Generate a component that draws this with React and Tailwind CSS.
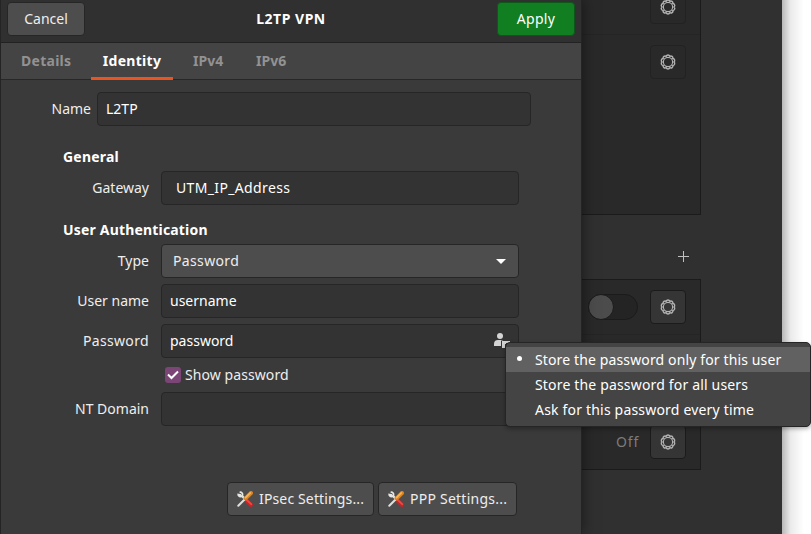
function Gear() {
  return (
    <svg viewBox="0 0 16 16" className="h-4 w-4" fill="none" stroke="#b4b4b4">
      <path
        d="M6.150 2.290A2 2 0 0 1 9.850 2.290A2 2 0 0 1 12.840 4.470A2 2 0 0 1 13.990 7.990A2 2 0 0 1 12.850 11.520A2 2 0 0 1 9.860 13.710A2 2 0 0 1 6.150 13.710A2 2 0 0 1 3.150 11.520A2 2 0 0 1 2.010 8A2 2 0 0 1 3.150 4.470A2 2 0 0 1 6.150 2.290Z"
        strokeWidth="1.4"
      />
      <circle cx="8" cy="8" r="4.600" strokeWidth="1.1" />
    </svg>
  );
}

function GearButton({ flat }) {
  return (
    <button
      className={
        "flex h-[34px] w-9 shrink-0 items-center justify-center rounded-[4px] border " +
        (flat ? "border-[#222222] bg-[#292929]" : "border-[#1b1b1b] bg-[#353535]")
      }
    >
      <Gear />
    </button>
  );
}

function Tools() {
  return (
    <svg viewBox="0 0 16 16" className="h-4 w-4 shrink-0" fill="none" strokeLinecap="round">
      <path d="M9.500 9.500L13.800 13.800" stroke="#c4242a" strokeWidth="4.200" />
      <path d="M9.800 9L14.200 13.200" stroke="#ee4a41" strokeWidth="1.800" />
      <path d="M5.400 5.400L8 8" stroke="#dededb" strokeWidth="2.400" />
      <path d="M3.300 1.200A2.200 2.200 0 1 1 1.200 3.400L3.400 3.800" stroke="#e6e6e3" strokeWidth="1.700" />
      <path d="M1.300 14.700L7.500 8.500" stroke="#e0e0dd" strokeWidth="2" />
      <path d="M8.600 7.400L14 2" stroke="#dc8420" strokeWidth="4" />
      <path d="M8.600 6.600L13.300 1.900" stroke="#f5b35a" strokeWidth="1.800" />
    </svg>
  );
}

function Field({ label, children, className, labelClass = "" }) {
  return (
    <div className={"flex h-[34px] w-[519px] items-center " + className}>
      <div className={"w-[149px] shrink-0 pb-[2px] text-right " + labelClass}>{label}</div>
      <div className="ml-3 flex-1">{children}</div>
    </div>
  );
}

const input = "flex h-[34px] items-center rounded-[4px] border border-[#262626] bg-[#333333] px-2 text-white";
const raised = "flex h-[34px] items-center rounded-[4px] border border-[#262626] bg-[#4d4d4d]";

function Dialog() {
  return (
    <section className="z-10 flex h-[534px] w-[582px] shrink-0 flex-col border-x border-[#242424] bg-[#3a3a3a] shadow-[0_0_14px_rgba(0,0,0,0.5)]">
      <header className="flex h-[43px] shrink-0 items-start justify-between border-b border-[#222222] bg-[#303030] px-[6px] pt-[2px]">
        <button className={raised + " w-[78px] justify-center"}><span className="pb-[2px]">Cancel</span></button>
        <h1 className="pt-[6px] font-bold tracking-[0.5px] text-white">L2TP VPN</h1>
        <button className="flex h-[34px] w-[78px] items-center justify-center rounded-[4px] border border-[#0d5818] bg-[#127e22] text-white">
          <span className="pb-[2px] tracking-[0.3px]">Apply</span>
        </button>
      </header>
      <nav className="flex h-[37px] shrink-0 border-b border-[#272727] bg-[#444444] pl-[2px] font-bold text-[#929292]">
        <div className="flex w-[88px] items-center pb-[2px] pl-[18px] tracking-[0.27px]">Details</div>
        <div className="-mb-px flex w-[82px] items-center justify-center border-b-[3px] border-[#e95420] tracking-[0.3px] text-white">Identity</div>
        <div className="flex w-[63px] items-center pb-[2px] pl-5">IPv4</div>
        <div className="flex items-center pb-[2px] pl-5">IPv6</div>
      </nav>
      <main className="-ml-px flex flex-col pt-3">
        <div className="flex h-[34px] items-center">
          <div className="w-[91px] pb-[2px] text-right">Name</div>
          <div className={input + " ml-[6px] w-[434px]"}><span className="pb-[2px]">L2TP</span></div>
        </div>
        <h2 className="mt-5 ml-[63px] h-[22px] leading-[22px] font-bold tracking-[0.2px] text-white">General</h2>
        <Field label="Gateway" className="mt-[3px]">
          <div className={input + " pl-[14px]"}><span className="pb-[2px] tracking-[0.35px]">UTM_IP_Address</span></div>
        </Field>
        <h2 className="mt-[14px] ml-[63px] h-[22px] leading-[22px] font-bold tracking-[0.18px] text-white">User Authentication</h2>
        <Field label="Type" className="mt-[3px]">
          <div className={raised + " justify-between pr-[12px] pl-[11px]"}>
            <span className="pb-[2px] tracking-[0.35px]">Password</span>
            <svg viewBox="0 0 10 5" className="h-[5px] w-[10px]" fill="#fff"><path d="M0 0H10L5 5Z" /></svg>
          </div>
        </Field>
        <Field label="User name" className="mt-[6px]">
          <div className={input}><span className="pb-[2px]">username</span></div>
        </Field>
        <Field label="Password" labelClass="tracking-[0.35px]" className="mt-[6px]">
          <div className={input + " justify-between"}>
            <span className="pb-[2px]">password</span>
            <svg viewBox="0 0 16 16" className="h-4 w-4" fill="#d4d4d4">
              <circle cx="6" cy="3" r="3" />
              <path d="M0 13V11Q0 7 4 7H8Q9 7 9 7.500H7V13Z" />
              <path d="M8 8H16V10H12V11H11V15H8Z" />
            </svg>
          </div>
        </Field>
        <div className="mt-[9px] ml-[165px] flex h-4 items-center gap-1">
          <span className="flex h-4 w-4 items-center justify-center rounded-[3px] bg-[#7b4676]">
            <svg viewBox="0 0 12 10" className="h-[10px] w-3" fill="none" stroke="#fff" strokeWidth="2"><path d="M1 4.500L4.500 8L11 1.500" /></svg>
          </span>
          <span className="pb-[2px] tracking-[0.08px]">Show password</span>
        </div>
        <Field label="NT Domain" className="mt-[9px]">
          <div className={input} />
        </Field>
        <div className="mt-14 ml-[227px] flex gap-1">
          <button className={raised + " w-[147px] gap-[6px] pl-[9px] whitespace-nowrap"}><Tools /><span className="pb-[2px] tracking-[0.14px]">IPsec Settings...</span></button>
          <button className={raised + " w-[139px] gap-[6px] pl-[9px] whitespace-nowrap"}><Tools /><span className="pb-[2px] tracking-[0.24px]">PPP Settings...</span></button>
        </div>
      </main>
    </section>
  );
}

export default function App() {
  return (
    <div className="relative flex h-[534px] w-[811px] overflow-hidden bg-white font-['Noto_Sans',sans-serif] text-[14px] text-[#eeeeee]">
      <Dialog />
      <aside className="flex w-[200px] shrink-0 flex-col bg-[#303030]">
        <div className="flex h-[215px] w-[119px] flex-col overflow-hidden border-r border-b border-[#1b1b1b] bg-[#292929]">
          <div className="flex h-[35px] shrink-0 justify-end border-b border-[#252525] pr-[14px]"><div className="-mt-[10px]"><GearButton flat /></div></div>
          <div className="flex justify-end pt-[10px] pr-[14px]"><GearButton flat /></div>
        </div>
        <div className="flex h-16 w-[119px] items-center justify-end pt-[18px] pr-[12px]">
          <svg viewBox="0 0 11 11" className="h-[11px] w-[11px]" stroke="#c0c0c0"><path d="M5.500 0V11M0 5.500H11" /></svg>
        </div>
        <div className="flex h-[191px] w-[119px] flex-col border-y border-r border-[#1b1b1b] bg-[#292929]">
          <div className="flex h-[55px] shrink-0 items-center border-b border-[#252525] pl-[6px]">
            <div className="flex h-[26px] w-[50px] items-center rounded-full border border-[#1b1b1b] bg-[#242424]">
              <span className="-ml-px h-[26px] w-[26px] rounded-full border border-[#1b1b1b] bg-[#4c4c4c]" />
            </div>
            <div className="ml-3"><GearButton /></div>
          </div>
          <div className="flex-1" />
          <div className="flex h-[54px] shrink-0 items-center justify-end gap-[11px] pr-[14px] text-[#7c7c7c]"><span className="pb-[2px] tracking-[0.8px]">Off</span><GearButton /></div>
        </div>
      </aside>
      <div className="flex-1 bg-linear-to-r from-[#b8b8b8] via-[#ebebeb] via-30% to-white to-75%" />
      <div className="absolute top-[342px] left-[505px] z-20 flex h-[85px] w-[306px] flex-col rounded-[5px] border border-[#252525] bg-[#444444] pt-1 text-white shadow-[0_2px_4px_rgba(0,0,0,0.3)]">
        <div className="flex h-[25px] items-center bg-[#616161] pl-[11px]">
          <span className="mr-[13px] mb-[2px] h-[5px] w-[5px] rounded-full bg-white" />
          <span className="tracking-[0.13px]">Store the password only for this user</span>
        </div>
        <div className="flex h-[25px] items-center pl-[29px] tracking-[0.17px]">Store the password for all users</div>
        <div className="flex h-[25px] items-center pl-[29px] tracking-[0.19px]">Ask for this password every time</div>
      </div>
    </div>
  );
}
